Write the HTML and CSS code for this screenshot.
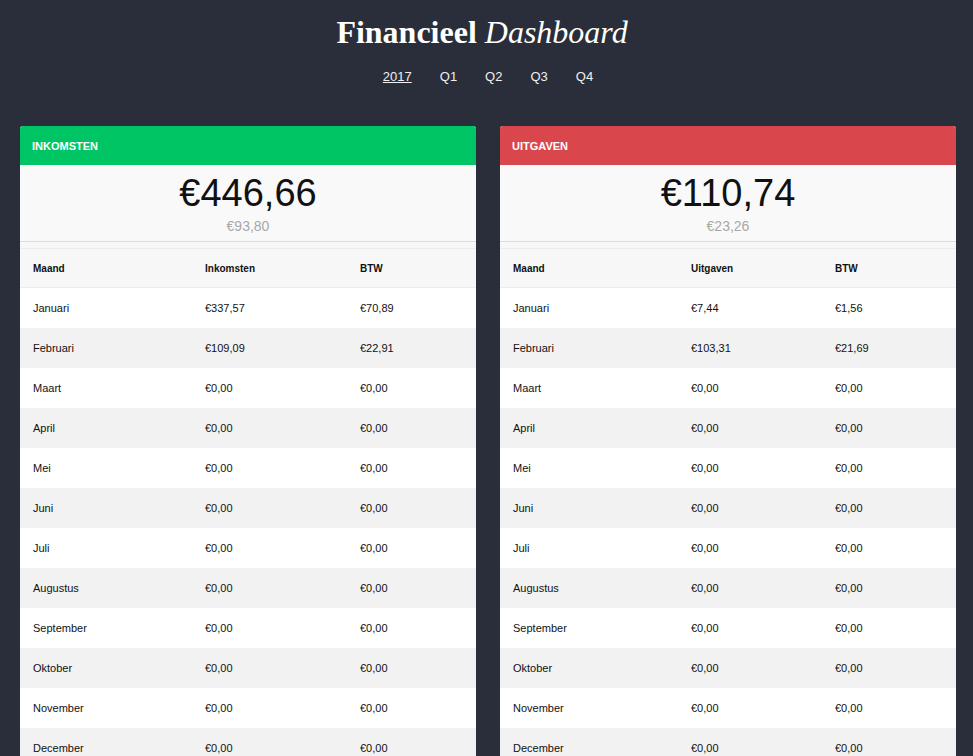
FILE: index.html
```html
<!DOCTYPE html>
<html lang="nl">
<head>
<meta charset="utf-8">
<title>Financieel Dashboard</title>
<link rel="stylesheet" href="styles.css">
</head>
<body>
<div class="page">
  <header class="top">
    <h1 class="title"><strong>Financieel</strong> <em>Dashboard</em></h1>
    <nav class="periods">
      <a class="period active" href="#">2017</a>
      <a class="period" href="#">Q1</a>
      <a class="period" href="#">Q2</a>
      <a class="period" href="#">Q3</a>
      <a class="period" href="#">Q4</a>
    </nav>
  </header>
  <main class="cards">
    <section class="card card-income">
      <div class="card-head">INKOMSTEN</div>
      <div class="summary">
        <div class="amount">€446,66</div>
        <div class="vat">€93,80</div>
      </div>
      <div class="spacer"></div>
      <div class="table">
        <div class="row head"><span>Maand</span><span>Inkomsten</span><span>BTW</span></div>
        <div class="row"><span>Januari</span><span>€337,57</span><span>€70,89</span></div>
        <div class="row"><span>Februari</span><span>€109,09</span><span>€22,91</span></div>
        <div class="row"><span>Maart</span><span>€0,00</span><span>€0,00</span></div>
        <div class="row"><span>April</span><span>€0,00</span><span>€0,00</span></div>
        <div class="row"><span>Mei</span><span>€0,00</span><span>€0,00</span></div>
        <div class="row"><span>Juni</span><span>€0,00</span><span>€0,00</span></div>
        <div class="row"><span>Juli</span><span>€0,00</span><span>€0,00</span></div>
        <div class="row"><span>Augustus</span><span>€0,00</span><span>€0,00</span></div>
        <div class="row"><span>September</span><span>€0,00</span><span>€0,00</span></div>
        <div class="row"><span>Oktober</span><span>€0,00</span><span>€0,00</span></div>
        <div class="row"><span>November</span><span>€0,00</span><span>€0,00</span></div>
        <div class="row"><span>December</span><span>€0,00</span><span>€0,00</span></div>
      </div>
    </section>
    <section class="card card-expense">
      <div class="card-head">UITGAVEN</div>
      <div class="summary">
        <div class="amount">€110,74</div>
        <div class="vat">€23,26</div>
      </div>
      <div class="spacer"></div>
      <div class="table">
        <div class="row head"><span>Maand</span><span>Uitgaven</span><span>BTW</span></div>
        <div class="row"><span>Januari</span><span>€7,44</span><span>€1,56</span></div>
        <div class="row"><span>Februari</span><span>€103,31</span><span>€21,69</span></div>
        <div class="row"><span>Maart</span><span>€0,00</span><span>€0,00</span></div>
        <div class="row"><span>April</span><span>€0,00</span><span>€0,00</span></div>
        <div class="row"><span>Mei</span><span>€0,00</span><span>€0,00</span></div>
        <div class="row"><span>Juni</span><span>€0,00</span><span>€0,00</span></div>
        <div class="row"><span>Juli</span><span>€0,00</span><span>€0,00</span></div>
        <div class="row"><span>Augustus</span><span>€0,00</span><span>€0,00</span></div>
        <div class="row"><span>September</span><span>€0,00</span><span>€0,00</span></div>
        <div class="row"><span>Oktober</span><span>€0,00</span><span>€0,00</span></div>
        <div class="row"><span>November</span><span>€0,00</span><span>€0,00</span></div>
        <div class="row"><span>December</span><span>€0,00</span><span>€0,00</span></div>
      </div>
    </section>
  </main>
</div>
</body>
</html>
```
FILE: styles.css
```css
html, body {
  margin: 0;
  padding: 0;
  background: #2a2e3a;
}
body {
  font-family: "Liberation Sans", Arial, sans-serif;
  color: #111;
}
.page {
  width: 936px;
  margin-left: 20px;
}
.top {
  text-align: center;
  color: #fff;
}
.title {
  margin: 14px 0 0;
  padding-right: 12px;
  font-family: "Liberation Serif", "Times New Roman", serif;
  font-size: 32px;
  line-height: 36px;
  font-weight: normal;
  color: #fff;
}
.title strong { font-weight: bold; }
.title em { font-style: italic; }
.periods {
  margin-top: 17px;
  display: flex;
  justify-content: center;
  line-height: 20px;
}
.period {
  color: #f0f0f0;
  text-decoration: none;
  font-size: 13px;
  margin: 0 14px;
}
.period.active {
  text-decoration: underline;
}
.cards {
  margin-top: 39px;
  display: grid;
  grid-template-columns: 456px 456px;
  column-gap: 24px;
}
.card {
  border-radius: 3px 3px 0 0;
  overflow: hidden;
  background: #fff;
}
.card-head {
  height: 39px;
  line-height: 40px;
  padding-left: 12px;
  font-size: 11px;
  font-weight: bold;
  color: #fff;
}
.card-income .card-head { background: #00c565; }
.card-expense .card-head { background: #d9474c; }
.summary {
  background: #f9f9f9;
  text-align: center;
  padding: 6px 0 6px;
  border-bottom: 1px solid #dcdcdc;
}
.amount {
  font-size: 38px;
  line-height: 44px;
  color: #111;
}
.vat {
  margin-top: 2px;
  font-size: 14px;
  line-height: 18px;
  color: #a8a8a8;
}
.spacer {
  height: 6px;
  background: #f7f7f7;
  border-bottom: 1px solid #ececec;
}
.row {
  display: grid;
  height: 40px;
  align-items: center;
  padding-left: 13px;
  font-size: 11px;
  background: #fff;
}
.card-income .row { grid-template-columns: 172px 155px 1fr; }
.card-expense .row { grid-template-columns: 178px 144px 1fr; }
.row:nth-child(odd) { background: #f2f2f2; }
.row.head {
  height: 38px;
  background: #f7f7f7;
  border-bottom: 1px solid #ececec;
  font-size: 10px;
  font-weight: bold;
}
```
